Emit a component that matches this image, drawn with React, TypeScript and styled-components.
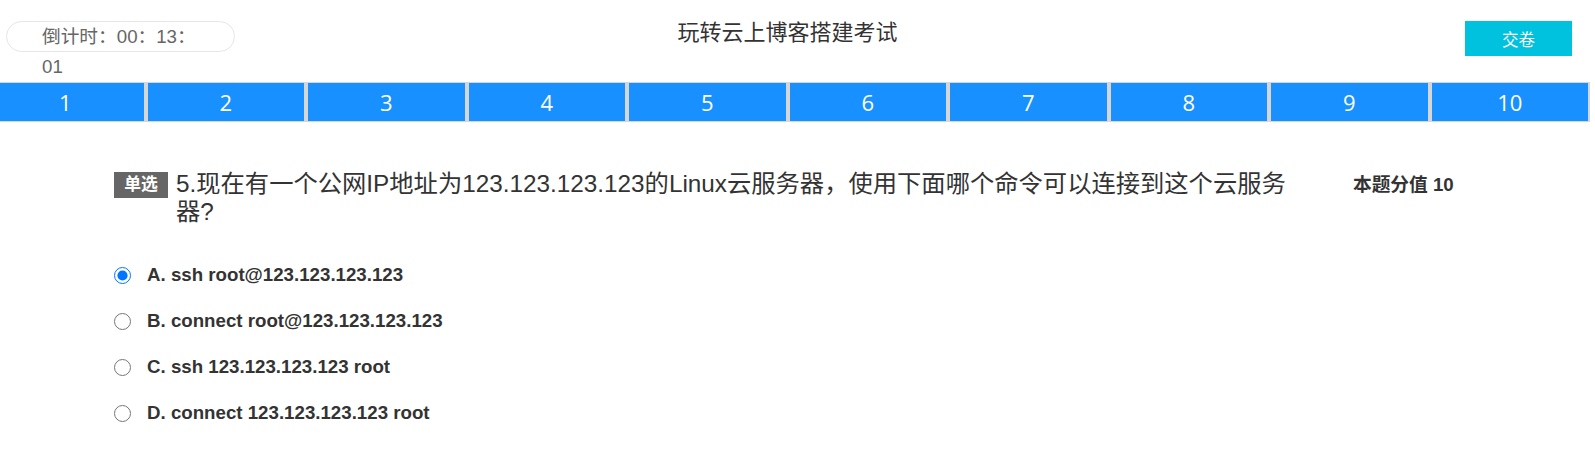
import styled, { createGlobalStyle } from 'styled-components'

const GlobalStyle = createGlobalStyle`
  html, body {
    margin: 0;
    padding: 0;
    background: #fff;
    overflow-x: hidden;
  }
  body {
    font-family: "Liberation Sans", "Noto Sans CJK SC", sans-serif;
    color: #333;
  }
  * {
    box-sizing: border-box;
  }
`

const Page = styled.div`
  width: 1605px;
  margin-left: -15px;
`

const Header = styled.header`
  display: grid;
  grid-template-columns: 1fr auto 1fr;
  align-items: start;
  height: 82px;
  padding-top: 21px;
`

const Timer = styled.div`
  justify-self: start;
  margin-left: 21px;
  width: 229px;
  height: 31px;
  padding: 0 35px;
  border: 1px solid #e6e6e6;
  border-radius: 16px;
  font-size: 18.7px;
  line-height: 30px;
  color: #666;
`

const Title = styled.h1`
  margin: 0;
  font-size: 22px;
  font-weight: normal;
  line-height: 24px;
  color: #333;
`

const SubmitButton = styled.button`
  justify-self: end;
  margin-right: 18px;
  width: 107px;
  height: 35px;
  border: none;
  background: #00c1de;
  color: #fff;
  font-family: "Liberation Sans", "Noto Sans CJK SC", sans-serif;
  font-size: 16.5px;
  cursor: pointer;
`

const Tabs = styled.nav`
  display: flex;
  height: 40px;
`

const Tab = styled.div`
  flex: 1;
  display: flex;
  align-items: center;
  justify-content: center;
  background: #1890ff;
  border: 1px solid #d6d6d6;
  border-width: 1px 2px;
  color: #fff;
  font-family: "Open Sans", "Liberation Sans", sans-serif;
  font-size: 22px;
`

const Question = styled.section`
  padding: 50px 0 0 129px;
`

const QuestionRow = styled.div`
  display: flex;
  align-items: flex-start;
`

const Badge = styled.span`
  flex-shrink: 0;
  width: 54px;
  height: 26px;
  line-height: 26px;
  background: #666;
  color: #fff;
  font-size: 16.8px;
  font-weight: bold;
  text-align: center;
`

const QuestionText = styled.p`
  margin: -2px 0 0 8px;
  width: 1120px;
  font-size: 24.3px;
  line-height: 28px;
  color: #333;
`

const Score = styled.span`
  flex-shrink: 0;
  margin-left: 57px;
  font-size: 18.7px;
  font-weight: bold;
  line-height: 26px;
  color: #333;
`

const Options = styled.ul`
  list-style: none;
  margin: 26px 0 0;
  padding: 0;
`

const Option = styled.li`
  display: flex;
  align-items: center;
  height: 46px;
`

const Radio = styled.input`
  width: 17px;
  height: 17px;
  margin: 0 16px 0 0;
`

const OptionLabel = styled.label`
  font-size: 18.7px;
  font-weight: bold;
  color: #333;
`

const options = [
  { key: 'A', text: 'ssh root@123.123.123.123' },
  { key: 'B', text: 'connect root@123.123.123.123' },
  { key: 'C', text: 'ssh 123.123.123.123 root' },
  { key: 'D', text: 'connect 123.123.123.123 root' },
]

const App = () => {
  return (
    <Page>
      <GlobalStyle />
      <Header>
        <Timer>倒计时：00：13：01</Timer>
        <Title>玩转云上博客搭建考试</Title>
        <SubmitButton>交卷</SubmitButton>
      </Header>
      <Tabs>
        {Array.from({ length: 10 }, (_, i) => (
          <Tab key={i}>{i + 1}</Tab>
        ))}
      </Tabs>
      <Question>
        <QuestionRow>
          <Badge>单选</Badge>
          <QuestionText>
            5.现在有一个公网IP地址为123.123.123.123的Linux云服务器，使用下面哪个命令可以连接到这个云服务器?
          </QuestionText>
          <Score>本题分值 10</Score>
        </QuestionRow>
        <Options>
          {options.map((o) => (
            <Option key={o.key}>
              <Radio
                type="radio"
                name="answer"
                id={`opt-${o.key}`}
                defaultChecked={o.key === 'A'}
              />
              <OptionLabel htmlFor={`opt-${o.key}`}>
                {o.key}. {o.text}
              </OptionLabel>
            </Option>
          ))}
        </Options>
      </Question>
    </Page>
  )
}

export default App
